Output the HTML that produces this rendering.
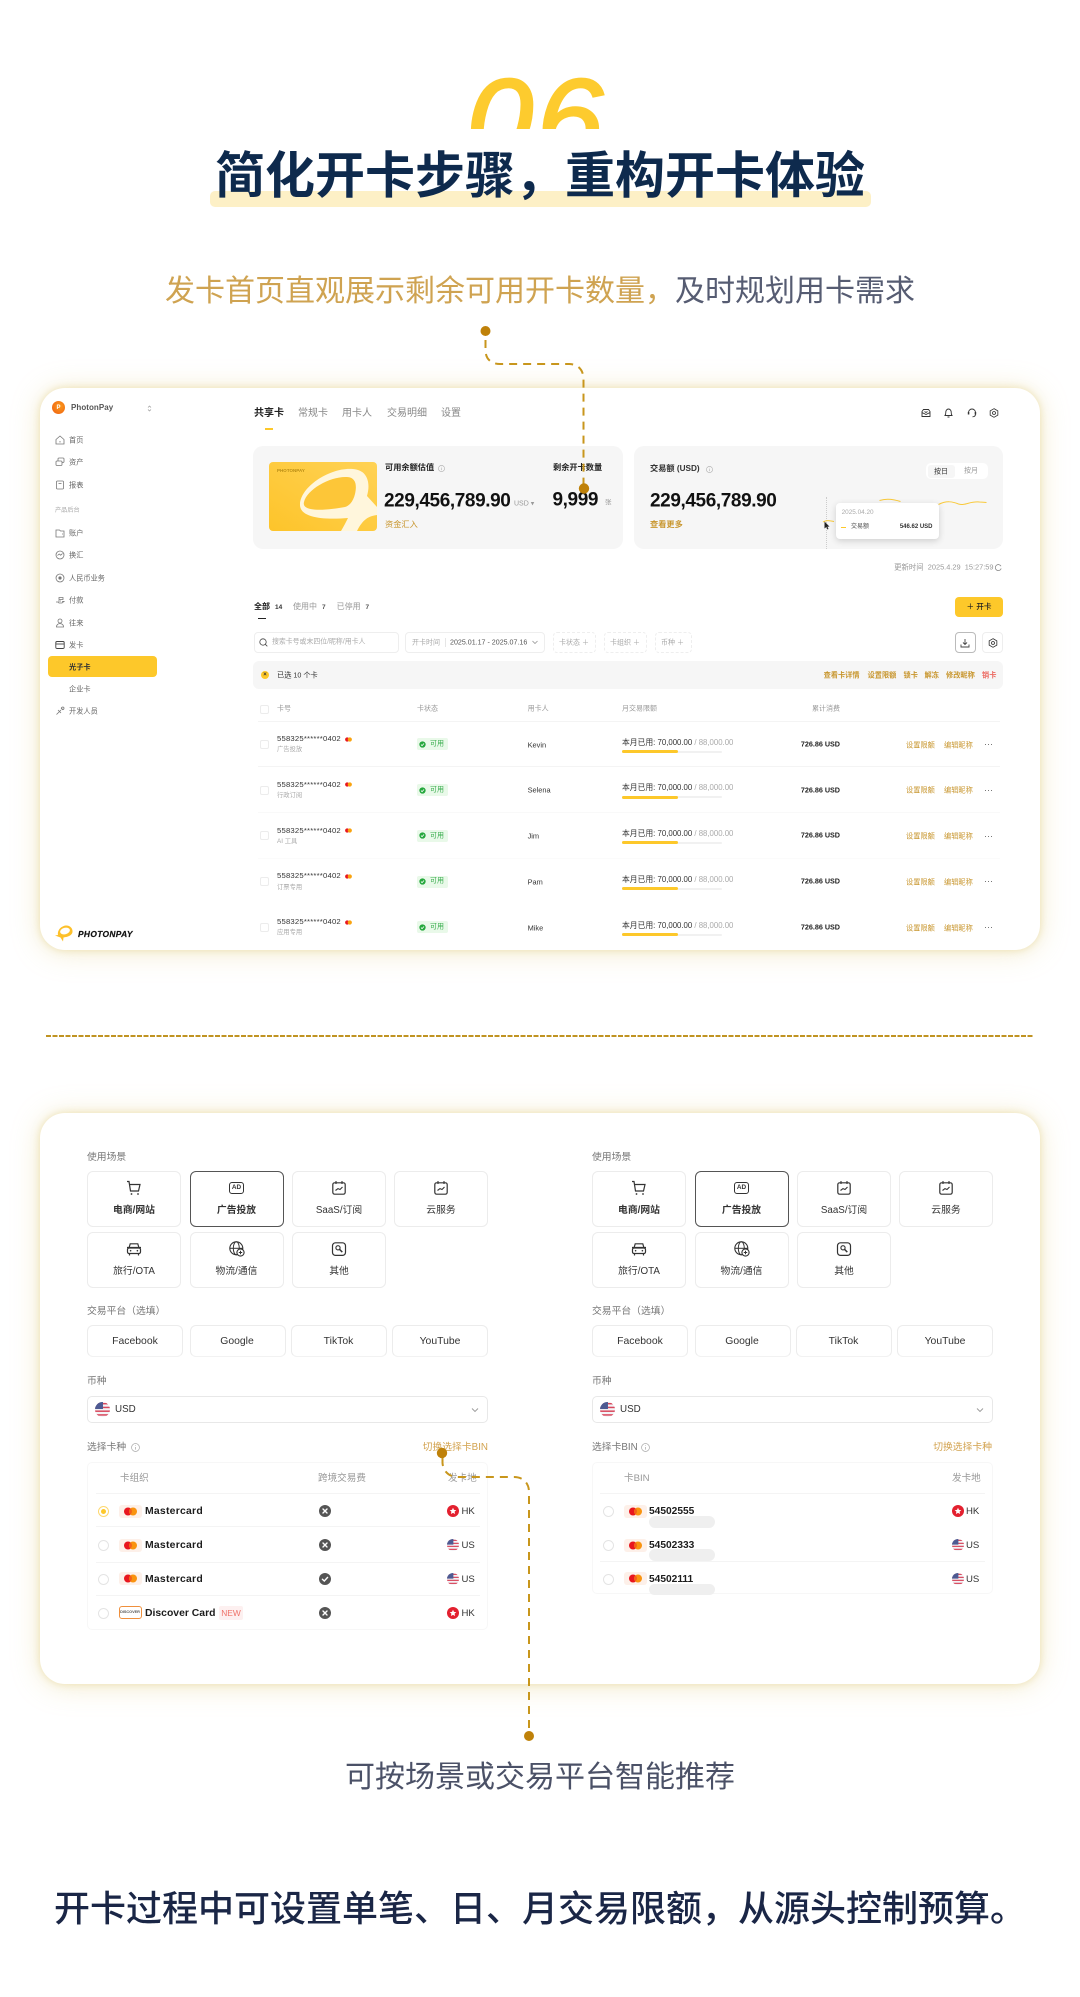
<!DOCTYPE html>
<html lang="zh-CN">
<head>
<meta charset="utf-8">
<title>简化开卡步骤，重构开卡体验</title>
<style>
*{box-sizing:border-box}
html,body{margin:0;padding:0;background:#fff}
body{width:1080px;height:1997px;position:relative;overflow:hidden;font-family:"Liberation Sans","Noto Sans CJK SC",sans-serif;color:#222}
.t{position:absolute;white-space:nowrap;line-height:1;transform:translateY(-50%)}
.c{position:absolute;white-space:nowrap;line-height:1;transform:translate(-50%,-50%)}
.a{position:absolute}
.g{color:#999}.gold{color:#c8962e}.b{font-weight:700}
.w2 .t,.w2 .c{margin-top:1.5px}
.side{font-size:7.2px;color:#666}
.tab{font-size:10px;color:#888;margin-top:1px}
.act{font-size:7.2px;color:#c8962e;font-weight:700}
.th{font-size:7px;color:#999}
.cd{font-size:7.7px;color:#333;letter-spacing:.2px}
.sb{font-size:6.3px;color:#aaa}
.st{left:417px;width:31px;height:12px;background:#e9f9e9;border-radius:2px}
.lm{font-size:7.8px;color:#333;left:622px}
.lm span{color:#aaa}
.trk{left:622px;width:100px;height:2px;background:#f1f1f1;border-radius:2px}
.bar{left:622px;width:56px;height:3px;background:#fdc82a;border-radius:2px}
.ck{left:260px;width:9px;height:9px;border:1px solid #ececec;border-radius:2px}
.dt{left:985px;width:7px;height:1.2px;background:repeating-linear-gradient(90deg,#777 0 1.2px,transparent 1.2px 2.9px)}
.card{position:absolute;left:40px;width:1000px;background:#fff;border-radius:25px;box-shadow:0 0 8px rgba(225,205,130,.55),0 2px 28px rgba(225,205,130,.38)}
.tile{position:absolute;width:94px;height:56px;border:1px solid #ececec;border-radius:6px;background:#fff}
.tile.on{border-color:#555}
.pf{position:absolute;width:96px;height:32px;border:1px solid #ececec;border-bottom-color:#f2f2f2;border-radius:6px}
.lb{font-size:9.8px;color:#777}
.tl{font-size:9.8px;color:#333}
.hd{font-size:9.6px;color:#999}
.nm{font-size:10.4px;font-weight:700;color:#1c1c1c;letter-spacing:.25px}
.fl{font-size:9.6px;color:#333}
.rd{position:absolute;width:11px;height:11px;border:1px solid #e4e4e4;border-radius:50%;background:#fff}
.ln{position:absolute;height:1px;background:#f4f4f4}
.sel{position:absolute;height:27px;border:1px solid #e8e8e8;border-radius:5px;width:401px}
.box{position:absolute;height:21px;top:632px;border:1px solid #eee;border-radius:4px;background:#fff}
</style>
</head>
<body>
<svg width="0" height="0" style="position:absolute">
<defs>
<clipPath id="cc"><circle cx="8" cy="8" r="8"/></clipPath>
<symbol id="us" viewBox="0 0 16 16"><g clip-path="url(#cc)"><rect width="16" height="16" fill="#f3f3f6"/><rect y="1" width="16" height="1.6" fill="#d8475c"/><rect y="5" width="16" height="1.6" fill="#d8475c"/><rect y="9" width="16" height="1.6" fill="#d8475c"/><rect y="13" width="16" height="1.6" fill="#d8475c"/><rect width="8.5" height="7.5" fill="#4d5a92"/></g></symbol>
<symbol id="hk" viewBox="0 0 16 16"><circle cx="8" cy="8" r="8" fill="#e3202f"/><path d="M8 3.6l1.3 2.9 3.1.3-2.3 2.1.7 3.1L8 10.5l-2.8 1.5.7-3.1-2.3-2.1 3.1-.3z" fill="#fff"/></symbol>
<symbol id="x" viewBox="0 0 12 12"><circle cx="6" cy="6" r="6" fill="#555"/><path d="M4 4l4 4M8 4l-4 4" stroke="#fff" stroke-width="1.4" stroke-linecap="round"/></symbol>
<symbol id="ok" viewBox="0 0 12 12"><circle cx="6" cy="6" r="6" fill="#555"/><path d="M3.4 6.2l1.9 1.8 3.3-3.6" stroke="#fff" stroke-width="1.4" fill="none" stroke-linecap="round"/></symbol>
<symbol id="mc" viewBox="0 0 23 13"><rect width="23" height="13" rx="3" fill="#fdf0e9"/><circle cx="9" cy="6.5" r="4" fill="#e8161f"/><circle cx="14" cy="6.5" r="4" fill="#f9930f"/><path d="M11.5 3.4a4 4 0 0 1 0 6.2a4 4 0 0 1 0-6.2z" fill="#f3601a"/></symbol>
<symbol id="mini" viewBox="0 0 8 5"><circle cx="2.5" cy="2.5" r="2.4" fill="#e8161f"/><circle cx="5.5" cy="2.5" r="2.4" fill="#f9a30f"/></symbol>
<symbol id="inf" viewBox="0 0 10 10"><circle cx="5" cy="5" r="4.4" fill="none" stroke="#aaa" stroke-width=".8"/><path d="M5 4.4v3M5 2.6v.8" stroke="#aaa" stroke-width=".8"/></symbol>
<symbol id="okg" viewBox="0 0 8 8"><circle cx="4" cy="4" r="3.6" fill="#25a83d"/><path d="M2.3 4.1l1.2 1.2 2.2-2.4" stroke="#fff" stroke-width=".9" fill="none"/></symbol>
<symbol id="cart" viewBox="0 0 16 16"><path d="M1 1.5h2l1.5 9.5h8L14 4.5H3.6" fill="none" stroke="#333" stroke-width="1.2"/><circle cx="5.5" cy="14" r=".9" fill="#333"/><circle cx="12" cy="14" r=".9" fill="#333"/></symbol>
<symbol id="cal" viewBox="0 0 16 16"><rect x="1.8" y="2.8" width="12.4" height="11.4" rx="1.8" fill="none" stroke="#333" stroke-width="1.2"/><path d="M5 1v3M11 1v3M4.5 10.5L7 8.6l2 .9 2.5-2.5" fill="none" stroke="#333" stroke-width="1.1"/></symbol>
<symbol id="car" viewBox="0 0 16 16"><path d="M3 7l1.2-4.2h7.6L13 7" fill="none" stroke="#333" stroke-width="1.2"/><rect x="1.5" y="7" width="13" height="5.5" rx="1.5" fill="none" stroke="#333" stroke-width="1.2"/><path d="M3.5 12.5v2M12.5 12.5v2M1 6.5h14" stroke="#333" stroke-width="1.2"/><circle cx="4.6" cy="9.7" r=".8" fill="#333"/><circle cx="11.4" cy="9.7" r=".8" fill="#333"/></symbol>
<symbol id="glb" viewBox="0 0 16 16"><circle cx="7.3" cy="7.3" r="6.5" fill="none" stroke="#333" stroke-width="1.1"/><ellipse cx="7.3" cy="7.3" rx="3" ry="6.5" fill="none" stroke="#333" stroke-width="1"/><path d="M1 7.3h12.6" stroke="#333" stroke-width="1"/><circle cx="11.5" cy="11.5" r="3.6" fill="#fff" stroke="#333" stroke-width="1.1"/><path d="M11.5 9.8v3.4M9.8 11.5h3.4" stroke="#333"/></symbol>
<symbol id="srch" viewBox="0 0 16 16"><rect x="1.5" y="1.8" width="13" height="12.6" rx="3" fill="none" stroke="#333" stroke-width="1.2"/><circle cx="7" cy="6.8" r="2.1" fill="none" stroke="#333" stroke-width="1.1"/><path d="M8.5 8.3l2.8 2.8" stroke="#333" stroke-width="1.5"/></symbol>
<symbol id="gear" viewBox="0 0 12 12"><path d="M6 .8l4.6 2.6v5.2L6 11.2 1.4 8.6V3.4z" fill="none" stroke="#333" stroke-width="1"/><circle cx="6" cy="6" r="1.8" fill="none" stroke="#333" stroke-width="1"/></symbol>
<symbol id="si1" viewBox="0 0 10 10"><path d="M1 4.5L5 1l4 3.5V9H1z M5 6v1.5" fill="none" stroke="#777" stroke-width=".8"/></symbol>
<symbol id="si2" viewBox="0 0 10 10"><rect x="3" y="1" width="6" height="4.5" rx="1" fill="none" stroke="#777" stroke-width=".8"/><rect x="1" y="4" width="6" height="4.5" rx="1" fill="#fff" stroke="#777" stroke-width=".8"/></symbol>
<symbol id="si3" viewBox="0 0 10 10"><rect x="1.5" y="1" width="7" height="8" rx="1" fill="none" stroke="#777" stroke-width=".8"/><path d="M3.5 3.5h3" stroke="#777" stroke-width=".8"/></symbol>
<symbol id="si4" viewBox="0 0 10 10"><path d="M1 2h3.5l1 1H9v6H1z M7 6h1" fill="none" stroke="#777" stroke-width=".8"/></symbol>
<symbol id="si5" viewBox="0 0 10 10"><circle cx="5" cy="5" r="4" fill="none" stroke="#777" stroke-width=".8"/><path d="M2.5 5.5L4.2 4l1.5 1.2L7.5 3.5" fill="none" stroke="#777" stroke-width=".8"/></symbol>
<symbol id="si6" viewBox="0 0 10 10"><circle cx="5" cy="5" r="4" fill="none" stroke="#777" stroke-width=".8"/><circle cx="5" cy="5" r="1.6" fill="#777"/></symbol>
<symbol id="si7" viewBox="0 0 10 10"><path d="M1 7h2l1 1h3l2-1.6-2 .1M3 6h3M4 2.5h4v2H4z" fill="none" stroke="#777" stroke-width=".8"/></symbol>
<symbol id="si8" viewBox="0 0 10 10"><circle cx="5" cy="3" r="2" fill="none" stroke="#777" stroke-width=".8"/><path d="M1.5 9c0-2.4 1.5-3.4 3.5-3.4S8.500 6.600 8.500 9z" fill="none" stroke="#777" stroke-width=".8"/></symbol>
<symbol id="si9" viewBox="0 0 10 10"><rect x=".8" y="1.5" width="8.400" height="7" rx="1.200" fill="none" stroke="#444" stroke-width=".9"/><path d="M.8 4h8.400" stroke="#444" stroke-width=".9"/></symbol>
<symbol id="si10" viewBox="0 0 10 10"><path d="M1.500 8.500L6 4M6 1.800l2.200 2.200M3 4l3 3" fill="none" stroke="#777" stroke-width=".8"/><circle cx="7.800" cy="2.200" r="1.200" fill="none" stroke="#777" stroke-width=".8"/></symbol>
</defs>
</svg>

<!-- heading -->
<div class="a" style="left:440px;top:40px;width:200px;height:89px;overflow:hidden">
  <div class="a" style="left:27px;top:12px;font-size:113px;line-height:1.2;font-weight:400;font-style:italic;color:#fdcb2e;-webkit-text-stroke:2.5px #fdcb2e;white-space:nowrap;letter-spacing:4px;transform:scaleX(1.05);transform-origin:0 0">06</div>
</div>
<div class="a" style="left:210px;top:191px;width:661px;height:16px;background:#fdf0c6;border-radius:5px"></div>
<div class="c" style="left:540px;top:176px;font-size:50px;font-weight:700;color:#0e2a4d">简化开卡步骤，重构开卡体验</div>
<div class="c" style="left:540px;top:292px;font-size:30px;font-weight:400;color:#cfa351">发卡首页直观展示剩余可用开卡数量，<span style="color:#565c72">及时规划用卡需求</span></div>

<!-- card 1 -->
<div class="card" style="top:388px;height:562px"></div>
<div class="a" style="left:0;top:0;width:1080px;height:1997px;filter:blur(.3px)">
  <!-- sidebar -->
  <div class="a" style="left:52px;top:401px;width:13px;height:13px;border-radius:50%;background:radial-gradient(circle at 60% 40%,#fb9a1d,#ee5c10)"></div>
  <div class="c b" style="left:58.500px;top:408px;font-size:6px;color:#fff">P</div>
  <div class="t" style="left:71px;top:408px;font-size:8px;color:#555;font-weight:700;letter-spacing:.05px">PhotonPay</div>
  <svg class="a" style="left:147px;top:405px" width="5" height="7" viewBox="0 0 5 7"><path d="M1 2.500l1.500-1.500L4 2.500M1 4.500L2.500 6 4 4.500" fill="none" stroke="#999" stroke-width=".7"/></svg>

  <svg class="a" style="left:55px;top:435px" width="10" height="10"><use href="#si1"/></svg><div class="t side" style="left:69px;top:440px">首页</div>
  <svg class="a" style="left:55px;top:457px" width="10" height="10"><use href="#si2"/></svg><div class="t side" style="left:69px;top:462px">资产</div>
  <svg class="a" style="left:55px;top:480px" width="10" height="10"><use href="#si3"/></svg><div class="t side" style="left:69px;top:485px">报表</div>
  <div class="t" style="left:55px;top:511px;font-size:6.200px;color:#aaa">产品后台</div>
  <svg class="a" style="left:55px;top:528px" width="10" height="10"><use href="#si4"/></svg><div class="t side" style="left:69px;top:533px">账户</div>
  <svg class="a" style="left:55px;top:550px" width="10" height="10"><use href="#si5"/></svg><div class="t side" style="left:69px;top:555px">换汇</div>
  <svg class="a" style="left:55px;top:573px" width="10" height="10"><use href="#si6"/></svg><div class="t side" style="left:69px;top:578px">人民币业务</div>
  <svg class="a" style="left:55px;top:595px" width="10" height="10"><use href="#si7"/></svg><div class="t side" style="left:69px;top:600px">付款</div>
  <svg class="a" style="left:55px;top:618px" width="10" height="10"><use href="#si8"/></svg><div class="t side" style="left:69px;top:623px">往来</div>
  <svg class="a" style="left:55px;top:640px" width="10" height="10"><use href="#si9"/></svg><div class="t side" style="left:69px;top:645px">发卡</div>
  <div class="a" style="left:48px;top:656px;width:109px;height:21px;background:#fdc82a;border-radius:4px"></div>
  <div class="t side b" style="left:69px;top:667px;color:#333">光子卡</div>
  <div class="t side" style="left:69px;top:689px">企业卡</div>
  <svg class="a" style="left:55px;top:706px" width="10" height="10"><use href="#si10"/></svg><div class="t side" style="left:69px;top:711px">开发人员</div>

  <svg class="a" style="left:54px;top:924px" width="20" height="19" viewBox="0 0 20 19"><path d="M4 11C3 5 9 1 13 1.500c5 .5 6.500 5.500 5 8-2 3.500-7 3.500-8.500 4L9 17.500l-2.500-4L1 11.500z" fill="#fdc02a"/><ellipse cx="11" cy="7" rx="5" ry="3.200" transform="rotate(-15 11 7)" fill="#fff"/></svg>
  <div class="t" style="left:78px;top:934px;font-size:8.400px;font-weight:700;font-style:italic;color:#111;letter-spacing:.35px;-webkit-text-stroke:.2px #111">PHOTONPAY</div>

  <!-- tabs -->
  <div class="t tab b" style="left:254px;top:413px;color:#222">共享卡</div>
  <div class="t tab" style="left:298px;top:413px">常规卡</div>
  <div class="t tab" style="left:342px;top:413px">用卡人</div>
  <div class="t tab" style="left:387px;top:413px">交易明细</div>
  <div class="t tab" style="left:441px;top:413px">设置</div>
  <div class="a" style="left:265px;top:428px;width:8px;height:1.500px;background:#fdc82a"></div>

  <!-- top icons -->
  <svg class="a" style="left:921px;top:408px" width="10" height="10" viewBox="0 0 10 10"><path d="M1 3.500V8.500h8V3.500L7.500 1.500h-5zM1 4.500l4 2 4-2M3.500 3.500L5 4.500l1.500-1" fill="none" stroke="#333" stroke-width=".9"/></svg>
  <svg class="a" style="left:943px;top:408px" width="11" height="10" viewBox="0 0 11 10"><path d="M2 7.500c.7-1 .8-2 .8-3.300C2.800 2.500 4 1 5.500 1s2.700 1.500 2.700 3.200c0 1.300.1 2.300.8 3.300zM4.500 9h2" fill="none" stroke="#333" stroke-width=".9"/></svg>
  <svg class="a" style="left:967px;top:408px" width="10" height="10" viewBox="0 0 10 10"><path d="M1.500 6V4.500a3.500 3.500 0 0 1 7 0V6M8.500 6c0 1.800-1.200 2.800-3 2.800" fill="none" stroke="#333" stroke-width=".9"/><rect x=".8" y="4" width="1.500" height="2.500" fill="#333"/><rect x="7.700" y="4" width="1.500" height="2.500" fill="#333"/></svg>
  <svg class="a" style="left:989px;top:408px" width="10" height="10"><use href="#gear"/></svg>

  <!-- balance -->
  <div class="a" style="left:253px;top:446px;width:370px;height:103px;background:#f6f6f6;border-radius:10px"></div>
  <svg class="a" style="left:269px;top:462px;border-radius:4px" width="108" height="69" viewBox="0 0 108 69">
    <defs><linearGradient id="yc" x1="0" y1="1" x2="1" y2="0"><stop offset="0" stop-color="#fdc42a"/><stop offset="1" stop-color="#ffd255"/></linearGradient></defs>
    <rect width="108" height="69" fill="url(#yc)"/>
    <path d="M31 42C32 24 62 5 84 7c14 1 18 13 14 27l10 11v8c-8 1-14 4-20 16H72c3-5 5-9 7-13C55 58 30 56 31 42z" fill="#fff6dc"/>
    <path d="M35 40c3-13 27-26 43-25 9 .5 10 8 8 17-2 8-6 12-10 13-16 3-44 6-41-5z" fill="#fdc638"/>
  </svg>
  <div class="t b" style="left:277px;top:471px;font-size:4.400px;color:#b88c14;letter-spacing:.1px">PHOTONPAY</div>
  <div class="t" style="left:385px;top:468px;font-size:8.200px;font-weight:700;color:#222">可用余额估值</div>
  <svg class="a" style="left:438px;top:465px" width="7" height="7"><use href="#inf"/></svg>
  <div class="t b" style="left:384px;top:501px;font-size:19px;letter-spacing:-.4px;color:#111">229,456,789.90</div>
  <div class="t g" style="left:514px;top:504px;font-size:7px">USD ▾</div>
  <div class="t gold" style="left:385px;top:525px;font-size:8.200px">资金汇入</div>
  <div class="t b" style="left:553px;top:468px;font-size:8.200px;color:#222">剩余开卡数量</div>
  <div class="t b" style="left:552.500px;top:500px;font-size:19px;letter-spacing:-.4px;color:#111">9,999</div>
  <div class="t g" style="left:605px;top:503px;font-size:6.500px">张</div>

  <!-- trade -->
  <div class="a" style="left:633.500px;top:446px;width:369.500px;height:103px;background:#f6f6f6;border-radius:10px"></div>
  <div class="t" style="left:650px;top:469px;font-size:8.200px;font-weight:700;color:#333">交易额 (USD)</div>
  <svg class="a" style="left:706px;top:466px" width="7" height="7"><use href="#inf"/></svg>
  <div class="t b" style="left:650px;top:501px;font-size:19px;letter-spacing:-.4px;color:#111">229,456,789.90</div>
  <div class="t gold b" style="left:650px;top:525px;font-size:8.200px">查看更多</div>
  <div class="a" style="left:926px;top:463px;width:61.500px;height:16px;background:#fff;border-radius:5px"></div>
  <div class="a" style="left:928px;top:465px;width:27px;height:13px;background:#f6f6f6;border-radius:3px"></div>
  <div class="c" style="left:941px;top:472px;font-size:7px;color:#333">按日</div>
  <div class="c g" style="left:971px;top:471px;font-size:7px">按月</div>
  <div class="a" style="left:825.500px;top:497px;height:52px;border-left:1px dotted #ccc"></div>
  <svg class="a" style="left:820px;top:495px" width="170" height="32" viewBox="0 0 170 32"><path d="M3 27c3-2 6-1.500 11-.5M59.500 5.500c6-2 12-2 21 1M118.500 9.500c8-4 14-3 20-.5 7 2 11-3 21-2 4 .3 5 .3 7 .5" fill="none" stroke="#f9c93a" stroke-width="1"/></svg>
  <div class="a" style="left:835.500px;top:503px;width:103.500px;height:36px;background:#fff;border-radius:4px;box-shadow:0 2px 7px rgba(0,0,0,.16)"></div>
  <div class="t" style="left:841.600px;top:513px;font-size:6.400px;color:#aaa">2025.04.20</div>
  <div class="a" style="left:841px;top:526.500px;width:5px;height:1px;background:#fdc82a"></div>
  <div class="t" style="left:851px;top:527px;font-size:6px;color:#555">交易额</div>
  <div class="t b" style="right:147.500px;top:527px;font-size:6px;color:#333">546.62 USD</div>
  <svg class="a" style="left:824px;top:521px" width="6" height="9" viewBox="0 0 6 9"><path d="M.5.500v7l1.800-1.500 1.200 2.500 1-.5L3.400 5.600H5.500z" fill="#222"/></svg>

  <div class="t" style="right:86.500px;top:567px;font-size:7.400px;color:#999">更新时间&nbsp; 2025.4.29&nbsp; 15:27:59</div>
  <svg class="a" style="left:995px;top:563.500px" width="7" height="7" viewBox="0 0 7 7"><path d="M6 2.200A3 3 0 1 0 6.200 4.500" fill="none" stroke="#888" stroke-width=".8"/></svg>

  <!-- list tabs -->
  <div class="t b" style="left:254px;top:607px;font-size:8px;color:#222">全部</div>
  <div class="t b" style="left:275px;top:607.500px;font-size:6.500px;color:#333">14</div>
  <div class="t g" style="left:293px;top:607px;font-size:8px">使用中</div>
  <div class="t b" style="left:322px;top:607.500px;font-size:6.500px;color:#555">7</div>
  <div class="t g" style="left:336.600px;top:607px;font-size:8px">已停用</div>
  <div class="t b" style="left:365.500px;top:607.500px;font-size:6.500px;color:#555">7</div>
  <div class="a" style="left:257.500px;top:617.500px;width:8px;height:1.500px;background:#222"></div>
  <div class="a" style="left:954.500px;top:597px;width:48.500px;height:20px;background:#fdc82a;border-radius:4px"></div>
  <div class="c" style="left:979px;top:607px;font-size:7.600px;color:#222;font-weight:500">＋ 开卡</div>

  <!-- filters -->
  <div class="box" style="left:253.500px;width:145px"></div>
  <svg class="a" style="left:259px;top:638px" width="9" height="9" viewBox="0 0 9 9"><circle cx="4" cy="4" r="3.200" fill="none" stroke="#444" stroke-width=".8"/><path d="M6.300 6.300L8.300 8.300" stroke="#444" stroke-width=".8"/></svg>
  <div class="t" style="left:272px;top:642.500px;font-size:6.900px;color:#aaa">搜索卡号或末四位/昵称/用卡人</div>
  <div class="box" style="left:405px;width:140px"></div>
  <div class="t" style="left:412px;top:642.500px;font-size:7px;color:#aaa">开卡时间</div>
  <div class="a" style="left:445px;top:638px;width:1px;height:9px;background:#e6e6e6"></div>
  <div class="t" style="left:450px;top:642.500px;font-size:7.100px;color:#555">2025.01.17 - 2025.07.16</div>
  <svg class="a" style="left:532px;top:640px" width="6" height="5" viewBox="0 0 6 5"><path d="M.5 1L3 3.500 5.500 1" fill="none" stroke="#888" stroke-width=".7"/></svg>
  <div class="box" style="left:553px;width:43px;border-style:dashed"></div><div class="t" style="left:559px;top:642.500px;font-size:7px;color:#aaa">卡状态 ＋</div>
  <div class="box" style="left:603.500px;width:43.500px;border-style:dashed"></div><div class="t" style="left:610px;top:642.500px;font-size:7px;color:#aaa">卡组织 ＋</div>
  <div class="box" style="left:655px;width:37px;border-style:dashed"></div><div class="t" style="left:661px;top:642.500px;font-size:7px;color:#aaa">币种 ＋</div>
  <div class="box" style="left:955px;width:20.500px;border-color:#bbb"></div>
  <svg class="a" style="left:960px;top:637.500px" width="10" height="10" viewBox="0 0 10 10"><path d="M5 1v5.500M3 4.500l2 2 2-2M1 6.500V9h8V6.500" fill="none" stroke="#444" stroke-width=".9"/></svg>
  <div class="box" style="left:982px;width:21px"></div>
  <svg class="a" style="left:987.500px;top:637.500px" width="10" height="10"><use href="#gear"/></svg>

  <!-- selected bar -->
  <div class="a" style="left:253px;top:661px;width:750px;height:28px;background:#f6f6f6;border-radius:6px"></div>
  <div class="a" style="left:261px;top:671px;width:8px;height:8px;background:#fdc82a;border-radius:50%"></div>
  <div class="c b" style="left:265px;top:675px;font-size:6px;color:#333">×</div>
  <div class="t" style="left:277px;top:675px;font-size:7.200px;color:#333">已选 10 个卡</div>
  <div class="t act" style="left:823.600px;top:675px">查看卡详情</div>
  <div class="t act" style="left:867.600px;top:675px">设置限额</div>
  <div class="t act" style="left:903.500px;top:675px">锁卡</div>
  <div class="t act" style="left:924.500px;top:675px">解冻</div>
  <div class="t act" style="left:946px;top:675px">修改昵称</div>
  <div class="t act" style="left:982px;top:675px;color:#ec6a62">销卡</div>

  <!-- table head -->
  <div class="a ck" style="top:704.500px"></div>
  <div class="t th" style="left:277px;top:709px">卡号</div>
  <div class="t th" style="left:417px;top:709px">卡状态</div>
  <div class="t th" style="left:527.600px;top:709px">用卡人</div>
  <div class="t th" style="left:622px;top:709px">月交易限额</div>
  <div class="t th" style="right:240px;top:709px">累计消费</div>
  <div class="ln" style="left:258px;top:721px;width:742px"></div>
  <div class="ln" style="left:258px;top:766px;width:742px"></div>
  <div class="ln" style="left:258px;top:812px;width:742px;background:#f9f9f9"></div>
  <div class="ln" style="left:258px;top:858px;width:742px;background:#fbfbfb"></div>

  <!-- row 1 -->
  <div class="a ck" style="top:740px"></div>
  <div class="t cd" style="left:277px;top:739px">558325******0402</div>
  <svg class="a" style="left:345px;top:736.500px" width="7" height="5"><use href="#mini"/></svg>
  <div class="t sb" style="left:277px;top:750px">广告投放</div>
  <div class="a st" style="top:738px"></div>
  <svg class="a" style="left:419px;top:740.500px" width="7" height="7"><use href="#okg"/></svg>
  <div class="t" style="left:430px;top:744px;font-size:7px;color:#3cae50">可用</div>
  <div class="t" style="left:527.600px;top:744.500px;font-size:7.400px;color:#333">Kevin</div>
  <div class="t lm" style="top:742.500px">本月已用: 70,000.00 <span>/ 88,000.00</span></div>
  <div class="a trk" style="top:750.500px"></div><div class="a bar" style="top:750px"></div>
  <div class="t b" style="right:240px;top:743.700px;font-size:7.200px;color:#222">726.86 USD</div>
  <div class="t act" style="left:906px;top:744.500px;font-weight:400">设置限额</div>
  <div class="t act" style="left:944px;top:744.500px;font-weight:400">编辑昵称</div>
  <div class="a dt" style="top:744px"></div>

  <!-- row 2 -->
  <div class="a ck" style="top:785.500px"></div>
  <div class="t cd" style="left:277px;top:784.700px">558325******0402</div>
  <svg class="a" style="left:345px;top:782.200px" width="7" height="5"><use href="#mini"/></svg>
  <div class="t sb" style="left:277px;top:796px">行政订阅</div>
  <div class="a st" style="top:784px"></div>
  <svg class="a" style="left:419px;top:786.500px" width="7" height="7"><use href="#okg"/></svg>
  <div class="t" style="left:430px;top:789.700px;font-size:7px;color:#3cae50">可用</div>
  <div class="t" style="left:527.600px;top:790.300px;font-size:7.400px;color:#333">Selena</div>
  <div class="t lm" style="top:788.200px">本月已用: 70,000.00 <span>/ 88,000.00</span></div>
  <div class="a trk" style="top:796px"></div><div class="a bar" style="top:795.500px"></div>
  <div class="t b" style="right:240px;top:789.500px;font-size:7.200px;color:#222">726.86 USD</div>
  <div class="t act" style="left:906px;top:790.300px;font-weight:400">设置限额</div>
  <div class="t act" style="left:944px;top:790.300px;font-weight:400">编辑昵称</div>
  <div class="a dt" style="top:789.800px"></div>

  <!-- row 3 -->
  <div class="a ck" style="top:831.300px"></div>
  <div class="t cd" style="left:277px;top:830.500px">558325******0402</div>
  <svg class="a" style="left:345px;top:828px" width="7" height="5"><use href="#mini"/></svg>
  <div class="t sb" style="left:277px;top:841.700px">AI 工具</div>
  <div class="a st" style="top:829.700px"></div>
  <svg class="a" style="left:419px;top:832.200px" width="7" height="7"><use href="#okg"/></svg>
  <div class="t" style="left:430px;top:835.500px;font-size:7px;color:#3cae50">可用</div>
  <div class="t" style="left:527.600px;top:836px;font-size:7.400px;color:#333">Jim</div>
  <div class="t lm" style="top:834px">本月已用: 70,000.00 <span>/ 88,000.00</span></div>
  <div class="a trk" style="top:841.800px"></div><div class="a bar" style="top:841.300px"></div>
  <div class="t b" style="right:240px;top:835.200px;font-size:7.200px;color:#222">726.86 USD</div>
  <div class="t act" style="left:906px;top:836px;font-weight:400">设置限额</div>
  <div class="t act" style="left:944px;top:836px;font-weight:400">编辑昵称</div>
  <div class="a dt" style="top:835.500px"></div>

  <!-- row 4 -->
  <div class="a ck" style="top:877px"></div>
  <div class="t cd" style="left:277px;top:876.300px">558325******0402</div>
  <svg class="a" style="left:345px;top:873.800px" width="7" height="5"><use href="#mini"/></svg>
  <div class="t sb" style="left:277px;top:887.500px">订票专用</div>
  <div class="a st" style="top:875.500px"></div>
  <svg class="a" style="left:419px;top:878px" width="7" height="7"><use href="#okg"/></svg>
  <div class="t" style="left:430px;top:881.300px;font-size:7px;color:#3cae50">可用</div>
  <div class="t" style="left:527.600px;top:882px;font-size:7.400px;color:#333">Pam</div>
  <div class="t lm" style="top:879.800px">本月已用: 70,000.00 <span>/ 88,000.00</span></div>
  <div class="a trk" style="top:887.700px"></div><div class="a bar" style="top:887.200px"></div>
  <div class="t b" style="right:240px;top:881px;font-size:7.200px;color:#222">726.86 USD</div>
  <div class="t act" style="left:906px;top:881.800px;font-weight:400">设置限额</div>
  <div class="t act" style="left:944px;top:881.800px;font-weight:400">编辑昵称</div>
  <div class="a dt" style="top:881.300px"></div>

  <!-- row 5 -->
  <div class="a ck" style="top:923px"></div>
  <div class="t cd" style="left:277px;top:922px">558325******0402</div>
  <svg class="a" style="left:345px;top:919.500px" width="7" height="5"><use href="#mini"/></svg>
  <div class="t sb" style="left:277px;top:933.300px">应用专用</div>
  <div class="a st" style="top:921px"></div>
  <svg class="a" style="left:419px;top:923.500px" width="7" height="7"><use href="#okg"/></svg>
  <div class="t" style="left:430px;top:927px;font-size:7px;color:#3cae50">可用</div>
  <div class="t" style="left:527.600px;top:927.700px;font-size:7.400px;color:#333">Mike</div>
  <div class="t lm" style="top:925.500px">本月已用: 70,000.00 <span>/ 88,000.00</span></div>
  <div class="a trk" style="top:933.500px"></div><div class="a bar" style="top:933px"></div>
  <div class="t b" style="right:240px;top:927px;font-size:7.200px;color:#222">726.86 USD</div>
  <div class="t act" style="left:906px;top:927.500px;font-weight:400">设置限额</div>
  <div class="t act" style="left:944px;top:927.500px;font-weight:400">编辑昵称</div>
  <div class="a dt" style="top:927px"></div>
</div>

<!-- divider -->
<div class="a" style="left:46px;top:1035px;width:987px;height:2px;background:repeating-linear-gradient(90deg,#c09322 0 5px,transparent 5px 6.500px)"></div>

<!-- card 2 -->
<div class="card" style="top:1113px;height:571px"></div>
<div class="a w2" style="left:0;top:0;width:1080px;height:1997px;filter:blur(.25px)">
  <!-- left column -->
  <div class="t lb" style="left:87px;top:1156px">使用场景</div>
  <div class="tile" style="left:87px;top:1171px"></div>
  <div class="tile on" style="left:189.500px;top:1171px"></div>
  <div class="tile" style="left:292px;top:1171px"></div>
  <div class="tile" style="left:394px;top:1171px"></div>
  <div class="tile" style="left:87px;top:1232px"></div>
  <div class="tile" style="left:189.500px;top:1232px"></div>
  <div class="tile" style="left:292px;top:1232px"></div>
  <svg class="a" style="left:126px;top:1180px" width="16" height="16"><use href="#cart"/></svg>
  <div class="a" style="left:229px;top:1182px;width:15px;height:12px;border:1.200px solid #333;border-radius:3px"></div>
  <div class="c b" style="left:236.500px;top:1186.500px;font-size:6.400px;color:#333">AD</div>
  <svg class="a" style="left:331px;top:1180px" width="16" height="16"><use href="#cal"/></svg>
  <svg class="a" style="left:433px;top:1180px" width="16" height="16"><use href="#cal"/></svg>
  <svg class="a" style="left:126px;top:1241px" width="16" height="16"><use href="#car"/></svg>
  <svg class="a" style="left:228.500px;top:1241px" width="16" height="16"><use href="#glb"/></svg>
  <svg class="a" style="left:331px;top:1241px" width="16" height="16"><use href="#srch"/></svg>
  <div class="c tl b" style="left:134px;top:1209px">电商/网站</div>
  <div class="c tl b" style="left:236.500px;top:1209px">广告投放</div>
  <div class="c tl" style="left:339px;top:1209px">SaaS/订阅</div>
  <div class="c tl" style="left:441px;top:1209px">云服务</div>
  <div class="c tl" style="left:134px;top:1270px">旅行/OTA</div>
  <div class="c tl" style="left:236.500px;top:1270px">物流/通信</div>
  <div class="c tl" style="left:339px;top:1270px">其他</div>
  <div class="t lb" style="left:87px;top:1310px">交易平台（选填）</div>
  <div class="pf" style="left:87px;top:1325px"></div>
  <div class="pf" style="left:189.500px;top:1325px"></div>
  <div class="pf" style="left:290.500px;top:1325px"></div>
  <div class="pf" style="left:392px;top:1325px"></div>
  <div class="c tl" style="left:135px;top:1340px;font-size:10.400px">Facebook</div>
  <div class="c tl" style="left:237px;top:1340px;font-size:10.400px">Google</div>
  <div class="c tl" style="left:338.500px;top:1340px;font-size:10.400px">TikTok</div>
  <div class="c tl" style="left:440px;top:1340px;font-size:10.400px">YouTube</div>
  <div class="t lb" style="left:87px;top:1380px">币种</div>
  <div class="sel" style="left:87px;top:1396px"></div>
  <svg class="a" style="left:95px;top:1402px" width="15" height="15"><use href="#us"/></svg>
  <div class="t tl" style="left:115px;top:1408px">USD</div>
  <svg class="a" style="left:471px;top:1407px" width="8" height="6" viewBox="0 0 8 6"><path d="M1 1.500L4 4.500 7 1.500" fill="none" stroke="#999" stroke-width=".9"/></svg>
  <div class="t lb" style="left:87px;top:1446px">选择卡种</div>
  <svg class="a" style="left:131px;top:1442.500px" width="9" height="9"><use href="#inf"/></svg>
  <div class="t" style="right:592px;top:1446px;font-size:9.800px;color:#d2a24e">切换选择卡BIN</div>

  <div class="a" style="left:87px;top:1462px;width:401px;height:168px;border:1px solid #f7f7f7;border-radius:5px"></div>
  <div class="t hd" style="left:120px;top:1477px">卡组织</div>
  <div class="t hd" style="left:318px;top:1477px">跨境交易费</div>
  <div class="t hd" style="left:448px;top:1477px">发卡地</div>
  <div class="ln" style="left:96px;top:1493px;width:384px"></div>
  <div class="ln" style="left:96px;top:1526px;width:384px"></div>
  <div class="ln" style="left:96px;top:1562px;width:384px"></div>
  <div class="ln" style="left:96px;top:1595px;width:384px"></div>

  <div class="rd" style="left:98px;top:1506px;border-color:#fdd870"></div>
  <div class="a" style="left:101px;top:1509px;width:5px;height:5px;border-radius:50%;background:#fdc82a"></div>
  <svg class="a" style="left:119px;top:1505px" width="23" height="13"><use href="#mc"/></svg>
  <div class="t nm" style="left:145px;top:1510px">Mastercard</div>
  <svg class="a" style="left:318.600px;top:1505px" width="12" height="12"><use href="#x"/></svg>
  <svg class="a" style="left:447px;top:1505px" width="12" height="12"><use href="#hk"/></svg>
  <div class="t fl" style="left:461.500px;top:1510px">HK</div>

  <div class="rd" style="left:98px;top:1540px"></div>
  <svg class="a" style="left:119px;top:1539px" width="23" height="13"><use href="#mc"/></svg>
  <div class="t nm" style="left:145px;top:1544px">Mastercard</div>
  <svg class="a" style="left:318.600px;top:1539px" width="12" height="12"><use href="#x"/></svg>
  <svg class="a" style="left:447px;top:1539px" width="12" height="12"><use href="#us"/></svg>
  <div class="t fl" style="left:461.500px;top:1544px">US</div>

  <div class="rd" style="left:98px;top:1574px"></div>
  <svg class="a" style="left:119px;top:1572px" width="23" height="13"><use href="#mc"/></svg>
  <div class="t nm" style="left:145px;top:1578px">Mastercard</div>
  <svg class="a" style="left:318.600px;top:1573px" width="12" height="12"><use href="#ok"/></svg>
  <svg class="a" style="left:447px;top:1573px" width="12" height="12"><use href="#us"/></svg>
  <div class="t fl" style="left:461.500px;top:1578px">US</div>

  <div class="rd" style="left:98px;top:1608px"></div>
  <div class="a" style="left:119px;top:1606px;width:23px;height:13px;border:1px solid #ef8f3c;border-radius:3px;background:#fff"></div>
  <div class="c" style="left:130px;top:1611px;font-size:3.800px;font-weight:700;color:#555">DISCOVER</div>
  <div class="t nm" style="left:145px;top:1612px;letter-spacing:0">Discover Card</div>
  <div class="a" style="left:219px;top:1606px;width:24px;height:14px;background:#fdf0f0;border-radius:2px"></div>
  <div class="c" style="left:231px;top:1611.500px;font-size:8.400px;color:#ef7269">NEW</div>
  <svg class="a" style="left:318.600px;top:1607px" width="12" height="12"><use href="#x"/></svg>
  <svg class="a" style="left:447px;top:1607px" width="12" height="12"><use href="#hk"/></svg>
  <div class="t fl" style="left:461.500px;top:1612px">HK</div>

  <!-- right column -->
  <div class="t lb" style="left:592px;top:1156px">使用场景</div>
  <div class="tile" style="left:592px;top:1171px"></div>
  <div class="tile on" style="left:694.500px;top:1171px"></div>
  <div class="tile" style="left:797px;top:1171px"></div>
  <div class="tile" style="left:899px;top:1171px"></div>
  <div class="tile" style="left:592px;top:1232px"></div>
  <div class="tile" style="left:694.500px;top:1232px"></div>
  <div class="tile" style="left:797px;top:1232px"></div>
  <svg class="a" style="left:631px;top:1180px" width="16" height="16"><use href="#cart"/></svg>
  <div class="a" style="left:734px;top:1182px;width:15px;height:12px;border:1.200px solid #333;border-radius:3px"></div>
  <div class="c b" style="left:741.500px;top:1186.500px;font-size:6.400px;color:#333">AD</div>
  <svg class="a" style="left:836px;top:1180px" width="16" height="16"><use href="#cal"/></svg>
  <svg class="a" style="left:938px;top:1180px" width="16" height="16"><use href="#cal"/></svg>
  <svg class="a" style="left:631px;top:1241px" width="16" height="16"><use href="#car"/></svg>
  <svg class="a" style="left:733.500px;top:1241px" width="16" height="16"><use href="#glb"/></svg>
  <svg class="a" style="left:836px;top:1241px" width="16" height="16"><use href="#srch"/></svg>
  <div class="c tl b" style="left:639px;top:1209px">电商/网站</div>
  <div class="c tl b" style="left:741.500px;top:1209px">广告投放</div>
  <div class="c tl" style="left:844px;top:1209px">SaaS/订阅</div>
  <div class="c tl" style="left:946px;top:1209px">云服务</div>
  <div class="c tl" style="left:639px;top:1270px">旅行/OTA</div>
  <div class="c tl" style="left:741.500px;top:1270px">物流/通信</div>
  <div class="c tl" style="left:844px;top:1270px">其他</div>
  <div class="t lb" style="left:592px;top:1310px">交易平台（选填）</div>
  <div class="pf" style="left:592px;top:1325px"></div>
  <div class="pf" style="left:694.500px;top:1325px"></div>
  <div class="pf" style="left:795.500px;top:1325px"></div>
  <div class="pf" style="left:897px;top:1325px"></div>
  <div class="c tl" style="left:640px;top:1340px;font-size:10.400px">Facebook</div>
  <div class="c tl" style="left:742px;top:1340px;font-size:10.400px">Google</div>
  <div class="c tl" style="left:843.500px;top:1340px;font-size:10.400px">TikTok</div>
  <div class="c tl" style="left:945px;top:1340px;font-size:10.400px">YouTube</div>
  <div class="t lb" style="left:592px;top:1380px">币种</div>
  <div class="sel" style="left:592px;top:1396px"></div>
  <svg class="a" style="left:600px;top:1402px" width="15" height="15"><use href="#us"/></svg>
  <div class="t tl" style="left:620px;top:1408px">USD</div>
  <svg class="a" style="left:976px;top:1407px" width="8" height="6" viewBox="0 0 8 6"><path d="M1 1.500L4 4.500 7 1.500" fill="none" stroke="#999" stroke-width=".9"/></svg>
  <div class="t lb" style="left:592px;top:1446px">选择卡BIN</div>
  <svg class="a" style="left:641px;top:1442.500px" width="9" height="9"><use href="#inf"/></svg>
  <div class="t" style="right:88px;top:1446px;font-size:9.800px;color:#d2a24e">切换选择卡种</div>

  <div class="a" style="left:592px;top:1462px;width:401px;height:132px;border:1px solid #f7f7f7;border-radius:5px"></div>
  <div class="t hd" style="left:624px;top:1477px">卡BIN</div>
  <div class="t hd" style="left:952px;top:1477px">发卡地</div>
  <div class="ln" style="left:600px;top:1493px;width:385px"></div>
  <div class="ln" style="left:600px;top:1561px;width:385px"></div>

  <div class="rd" style="left:603px;top:1506px"></div>
  <svg class="a" style="left:624px;top:1505px" width="23" height="13"><use href="#mc"/></svg>
  <div class="t b" style="left:649px;top:1510px;font-size:10.200px;color:#1c1c1c">54502555</div>
  <div class="a" style="left:649px;top:1516px;width:66px;height:12px;background:#efefef;border-radius:6px"></div>
  <svg class="a" style="left:952px;top:1505px" width="12" height="12"><use href="#hk"/></svg>
  <div class="t fl" style="left:966px;top:1510px">HK</div>

  <div class="rd" style="left:603px;top:1540px"></div>
  <svg class="a" style="left:624px;top:1539px" width="23" height="13"><use href="#mc"/></svg>
  <div class="t b" style="left:649px;top:1544px;font-size:10.200px;color:#1c1c1c">54502333</div>
  <div class="a" style="left:649px;top:1548.500px;width:66px;height:12px;background:#efefef;border-radius:6px"></div>
  <svg class="a" style="left:952px;top:1539px" width="12" height="12"><use href="#us"/></svg>
  <div class="t fl" style="left:966px;top:1544px">US</div>

  <div class="rd" style="left:603px;top:1574px"></div>
  <svg class="a" style="left:624px;top:1572px" width="23" height="13"><use href="#mc"/></svg>
  <div class="t b" style="left:649px;top:1578px;font-size:10.200px;color:#1c1c1c">54502111</div>
  <div class="a" style="left:648.500px;top:1584px;width:66px;height:11px;background:#efefef;border-radius:6px"></div>
  <svg class="a" style="left:952px;top:1573px" width="12" height="12"><use href="#us"/></svg>
  <div class="t fl" style="left:966px;top:1578px">US</div>
</div>

<!-- connector paths -->
<svg class="a" style="left:0;top:0;z-index:5" width="1080" height="1997" viewBox="0 0 1080 1997">
  <circle cx="485.500" cy="331" r="5" fill="#bf8109"/>
  <path d="M485.500 340V350C485.500 359 491 364 500 364H569C578 364 583.500 370 583.500 379V486" fill="none" stroke="#c8961c" stroke-width="2" stroke-dasharray="8 6"/>
  <circle cx="584" cy="488.500" r="5.200" fill="#bf8109"/>
  <circle cx="442" cy="1453" r="5.200" fill="#bf8109"/>
  <path d="M442.500 1458V1463C443 1470 448 1477 458 1477H514C523 1477 529 1483 529 1492V1731" fill="none" stroke="#c8961c" stroke-width="2" stroke-dasharray="8 6"/>
  <circle cx="529" cy="1736" r="5" fill="#bf8109"/>
</svg>

<!-- footer text -->
<div class="c" style="left:540px;top:1778px;font-size:30px;color:#4b5167">可按场景或交易平台智能推荐</div>
<div class="c" style="left:540px;top:1909px;font-size:36px;font-weight:500;color:#1a2646">开卡过程中可设置单笔、日、月交易限额，从源头控制预算。</div>
</body>
</html>
